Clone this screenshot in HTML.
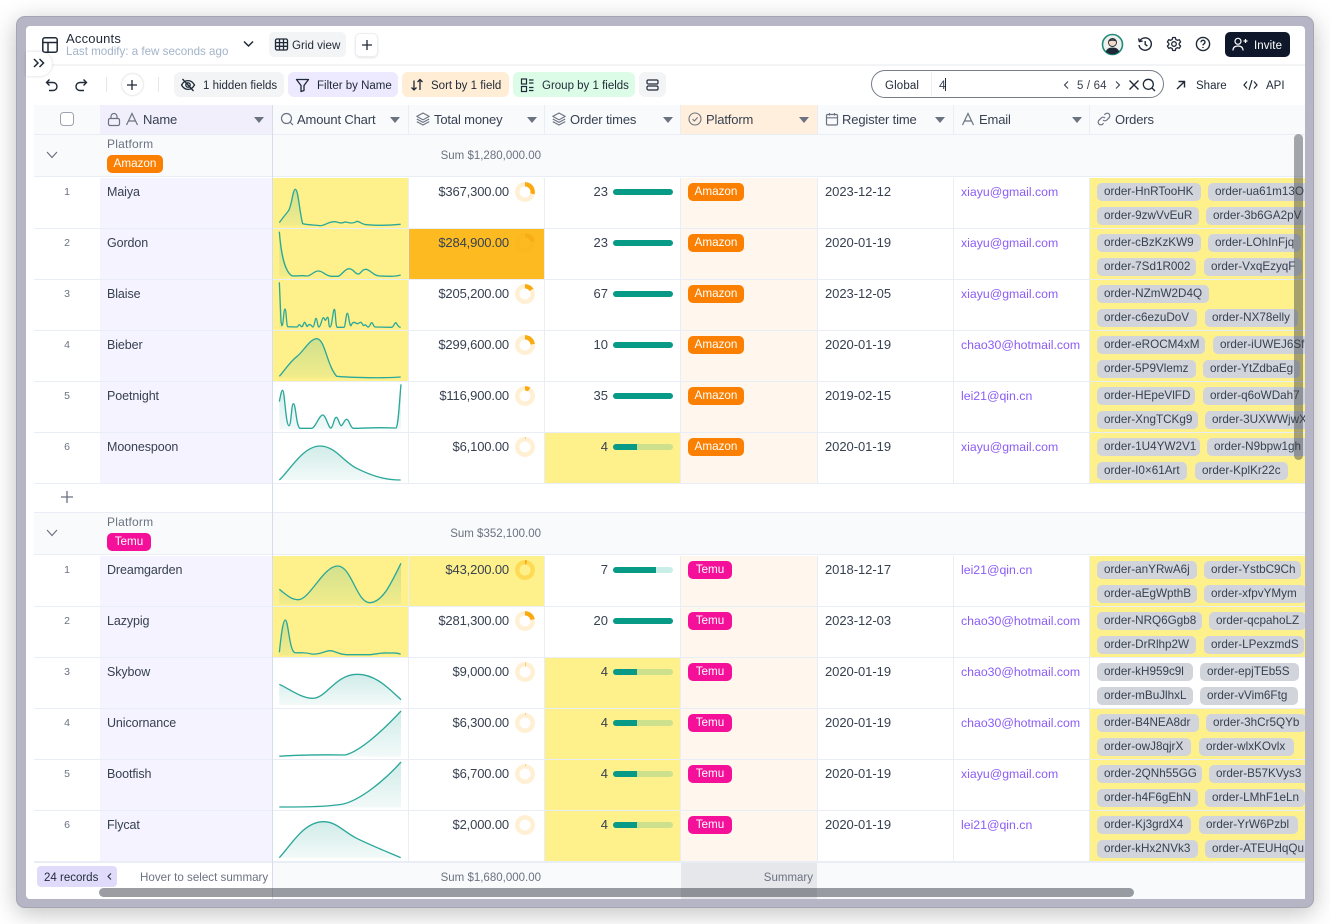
<!DOCTYPE html>
<html><head><meta charset="utf-8"><style>
*{box-sizing:border-box}
html,body{margin:0;padding:0;width:1330px;height:924px;overflow:hidden;background:#fff;font-family:"Liberation Sans",sans-serif;font-size:13px;color:#374151}
.abs,svg{position:absolute}
#frame{position:absolute;left:16px;top:16px;width:1298px;height:892px;background:#b6b5c6;border-radius:9px;box-shadow:0 5px 24px rgba(0,0,0,.25);border:1px solid #a5a5b2}
#win{position:absolute;left:26px;top:26px;width:1279px;height:873px;background:#fff;border-radius:4px}
#t{position:absolute;left:0;top:0;width:1305px;height:899px;overflow:hidden}
.tx{position:absolute;white-space:nowrap;line-height:16px}
.chip{position:absolute;top:72px;height:25px;border-radius:6px}
.r{position:absolute;left:34px;width:1271px;height:51px;background:#e9edf5}
.r>div{position:absolute;top:0;height:50px;background:#fff;line-height:28px;white-space:nowrap}
.r .a{left:0;width:66px;text-align:center;font-size:10.5px;color:#6b7280}
.r .b{left:66px;width:172px;background:#f5f3ff;padding-left:7px;font-size:12.5px;letter-spacing:-.1px}
.r .d{left:239px;width:135px}
.r .e{left:375px;width:135px;text-align:right;padding-right:35px;letter-spacing:-.15px}
.r .f{left:511px;width:135px;text-align:right;padding-right:72px}
.r .g{left:647px;width:136px;background:#fff7ed}
.r .h{left:784px;width:135px;padding-left:7px;letter-spacing:-.05px}
.r .i{left:920px;width:135px;padding-left:7px;color:#8b5cf6;font-size:12.3px}
.r .j{left:1056px;width:215px;overflow:hidden}
.r .y{background:#fef08a}
.r .o{background:#fdbb21}
.dn{position:absolute;left:106px;top:4px;width:20px;height:20px;border-radius:50%;background:conic-gradient(#faa90e 0 var(--p),#ffefd3 0);-webkit-mask:radial-gradient(circle,transparent 5.2px,#000 5.8px);mask:radial-gradient(circle,transparent 5.2px,#000 5.8px)}
.pb{position:absolute;left:68px;top:11px;width:60px;height:6px;border-radius:3px;background:#c9eee8;overflow:hidden}
.pb b{display:block;height:6px;background:#079a86}
.pb.yb{background:#cde08e}
.tg{position:absolute;left:7px;top:5px;height:18px;width:56px;border-radius:5px;background:#fb7f00;color:#fff;font-size:11.7px;line-height:18px;text-align:center}
.tg.tm{background:#f5109a;width:44px}
.k{position:absolute;height:18px;top:5px;border-radius:5px;background:#d1d5db;font-style:normal;font-size:11.7px;line-height:18px;padding-left:7px;color:#374151;white-space:nowrap;overflow:hidden}
.k.l{top:29px;line-height:17px}
.gh{position:absolute;left:34px;width:1271px;height:43px;background:#f8fafc;border-bottom:1px solid #e9edf5;border-top:1px solid #e9edf5}
.hd{position:absolute;top:105px;height:29px;background:#f8fafc;line-height:29px;white-space:nowrap;color:#374151;letter-spacing:-.15px}
.tri{position:absolute;width:0;height:0;border-left:5px solid transparent;border-right:5px solid transparent;border-top:6px solid #6b7280;top:117px}
.tb{font-size:11.5px;color:#1f2937;top:78px}
.sm{font-size:11.5px;color:#6b7280}
</style></head><body>
<div id="frame"></div>
<div id="win"></div>

<!-- top header -->
<div class="abs" style="left:26px;top:64px;width:1279px;height:2px;background:#f3f4f6"></div>
<svg style="left:41px;top:36px" width="18" height="18" viewBox="0 0 18 18" fill="none" stroke="#1f2937" stroke-width="1.5"><rect x="1.8" y="1.8" width="14.4" height="14.4" rx="2"/><path d="M1.8 6.5H16.2M7 6.5V16.2"/></svg>
<div class="tx" style="left:66px;top:31px;font-size:13px;color:#1f2937;letter-spacing:.2px">Accounts</div>
<div class="tx" style="left:66px;top:44px;font-size:11.6px;color:#a3b3c9">Last modify: a few seconds ago</div>
<svg style="left:242px;top:39px" width="13" height="10" viewBox="0 0 13 10" fill="none" stroke="#1f2937" stroke-width="1.5"><path d="M2 2.5L6.5 7L11 2.5"/></svg>
<div class="abs" style="left:269px;top:32px;width:77px;height:25px;background:#f3f4f6;border-radius:5px"></div>
<svg style="left:274px;top:37px" width="15" height="15" viewBox="0 0 15 15" fill="none" stroke="#1f2937" stroke-width="1.3"><rect x="1.5" y="2" width="12" height="11" rx="1.5"/><path d="M1.5 5.6H13.5M1.5 9.3H13.5M5.5 2V13M9.5 2V13"/></svg>
<div class="tx" style="left:292px;top:38px;font-size:11.6px;color:#1f2937">Grid view</div>
<div class="abs" style="left:355px;top:33px;width:23px;height:24px;background:#fff;border:1px solid #eceef1;border-radius:5px;box-shadow:0 1px 2px rgba(0,0,0,.1)"></div>
<svg style="left:360px;top:38px" width="14" height="14" viewBox="0 0 14 14" stroke="#1f2937" stroke-width="1.3"><path d="M7 2V12M2 7H12"/></svg>

<div class="abs" style="left:26px;top:52px;width:26px;height:24px;background:#fff;border-radius:0 12px 12px 0;box-shadow:0 0 3px rgba(0,0,0,.16)"></div>
<svg style="left:32px;top:57px" width="14" height="12" viewBox="0 0 14 12" fill="none" stroke="#1f2937" stroke-width="1.5"><path d="M2 2L6 6L2 10M7.5 2L11.5 6L7.5 10"/></svg>

<!-- top right -->
<svg style="left:1101px;top:33px" width="23" height="23" viewBox="0 0 23 23"><circle cx="11.5" cy="11.5" r="10" fill="#eef0ee" stroke="#1f8a78" stroke-width="1.6"/><path d="M4.8 18.5C6 15 9 14.6 11.5 14.6S17 15 18.2 18.5A9.2 9.2 0 0 1 4.8 18.5Z" fill="#1f2937"/><circle cx="11.5" cy="9.5" r="4" fill="#f4d9c5" stroke="#1f2937" stroke-width=".9"/><path d="M7.4 8.6C7.8 5.4 15.2 5.4 15.6 8.6C13.5 7.4 9.5 7.4 7.4 8.6Z" fill="#1f2937"/></svg>
<svg style="left:1137px;top:36px" width="16" height="16" viewBox="0 0 16 16" fill="none" stroke="#1f2937" stroke-width="1.4"><path d="M2.6 5.2A6.2 6.2 0 1 1 2 9"/><path d="M1.6 2.4L2.4 5.6L5.6 5"/><path d="M8.2 5V8.4L10.4 10"/></svg>
<svg style="left:1166px;top:36px" width="16" height="16" viewBox="0 0 16 16" fill="none" stroke="#1f2937" stroke-width="1.3"><path d="M6.7 1.5H9.3L9.8 3.4L11.4 4.3L13.3 3.7L14.6 6L13.2 7.3V8.8L14.6 10L13.3 12.3L11.4 11.7L9.8 12.6L9.3 14.5H6.7L6.2 12.6L4.6 11.7L2.7 12.3L1.4 10L2.8 8.8V7.3L1.4 6L2.7 3.7L4.6 4.3L6.2 3.4Z" stroke-linejoin="round"/><circle cx="8" cy="8" r="2.3"/></svg>
<svg style="left:1195px;top:36px" width="16" height="16" viewBox="0 0 16 16" fill="none" stroke="#1f2937" stroke-width="1.4"><circle cx="8" cy="8" r="6.6"/><path d="M6 6.2C6 3.7 10 3.7 10 6.2C10 7.8 8 7.8 8 9.4"/><path d="M8 11V12"/></svg>
<div class="abs" style="left:1225px;top:32px;width:65px;height:25px;background:#0f172a;border-radius:5px"></div>
<svg style="left:1232px;top:37px" width="16" height="15" viewBox="0 0 16 15" fill="none" stroke="#fff" stroke-width="1.2"><circle cx="6" cy="4.3" r="3"/><path d="M1 13.5C1 10 3.4 9 6 9S11 10 11 13.5"/><path d="M11.5 4H15.5M13.5 2V6"/></svg>
<div class="tx" style="left:1254px;top:38px;font-size:11.5px;color:#fff;letter-spacing:.1px">Invite</div>

<!-- toolbar -->
<svg style="left:45px;top:78px" width="14" height="14" viewBox="0 0 14 14" fill="none" stroke="#1f2937" stroke-width="1.4"><path d="M4.5 1.5L1.5 4.5L4.5 7.5"/><path d="M1.8 4.5H8A4 4 0 0 1 8 12.5H4"/></svg>
<svg style="left:74px;top:78px" width="14" height="14" viewBox="0 0 14 14" fill="none" stroke="#1f2937" stroke-width="1.4"><path d="M9.5 1.5L12.5 4.5L9.5 7.5"/><path d="M12.2 4.5H6A4 4 0 0 0 6 12.5H10"/></svg>
<div class="abs" style="left:106px;top:77px;width:1px;height:15px;background:#e5e7eb"></div>
<div class="abs" style="left:122px;top:74px;width:21px;height:21px;border-radius:50%;background:#fff;box-shadow:0 0 2px rgba(0,0,0,.25)"></div>
<svg style="left:125px;top:78px" width="14" height="14" viewBox="0 0 14 14" stroke="#1f2937" stroke-width="1.3"><path d="M7 2V12M2 7H12"/></svg>
<div class="abs" style="left:158px;top:77px;width:1px;height:15px;background:#e5e7eb"></div>

<div class="chip" style="left:174px;width:110px;background:#f3f4f6"></div>
<svg style="left:180px;top:77px" width="16" height="16" viewBox="0 0 16 16" fill="none" stroke="#1f2937" stroke-width="1.3"><path d="M1.5 8C3.2 5 5.5 3.6 8 3.6S12.8 5 14.5 8C12.8 11 10.5 12.4 8 12.4S3.2 11 1.5 8Z"/><circle cx="8" cy="8" r="2.2"/><path d="M2.5 2L13.5 14"/></svg>
<div class="tx tb" style="left:203px">1 hidden fields</div>
<div class="chip" style="left:288px;width:110px;background:#ede9fe"></div>
<svg style="left:295px;top:77px" width="15" height="16" viewBox="0 0 15 16" fill="none" stroke="#1f2937" stroke-width="1.3"><path d="M1.5 2.5H13.5L9 8.5V13.5L6 14.5V8.5Z" stroke-linejoin="round"/></svg>
<div class="tx tb" style="left:317px">Filter by Name</div>
<div class="chip" style="left:402px;width:107px;background:#ffedd5"></div>
<svg style="left:410px;top:77px" width="14" height="16" viewBox="0 0 14 16" fill="none" stroke="#1f2937" stroke-width="1.3"><path d="M4 3.5V13M1.5 10.5L4 13L6.5 10.5M10 13V2.5M7.5 5L10 2.5L12.5 5"/></svg>
<div class="tx tb" style="left:431px">Sort by 1 field</div>
<div class="chip" style="left:513px;width:122px;background:#dcfce7"></div>
<svg style="left:520px;top:77px" width="15" height="16" viewBox="0 0 15 16" fill="none" stroke="#1f2937" stroke-width="1.2"><rect x="1.5" y="2" width="5" height="5"/><rect x="1.5" y="9.5" width="5" height="5"/><path d="M9 3H13.5M9 6H13.5M9 10.5H13.5M9 13.5H13.5"/></svg>
<div class="tx tb" style="left:542px">Group by 1 fields</div>
<div class="chip" style="left:639px;width:27px;background:#f3f4f6"></div>
<svg style="left:646px;top:78px" width="13" height="14" viewBox="0 0 13 14" fill="none" stroke="#1f2937" stroke-width="1.2"><rect x="1" y="2" width="11" height="4" rx="1.3"/><rect x="1" y="8" width="11" height="4" rx="1.3"/></svg>

<!-- search -->
<div class="abs" style="left:871px;top:70px;width:293px;height:28px;border:1.5px solid #767c88;border-radius:14px;background:#fff"></div>
<div class="abs" style="left:931px;top:72px;width:1px;height:24px;background:#eceef1"></div>
<div class="tx tb" style="left:885px;letter-spacing:.15px">Global</div>
<div class="tx" style="left:939px;top:77px;font-size:12px;color:#374151">4</div>
<div class="abs" style="left:945px;top:78px;width:1px;height:13px;background:#1f2937"></div>
<svg style="left:1062px;top:80px" width="8" height="10" viewBox="0 0 8 10" fill="none" stroke="#374151" stroke-width="1.1"><path d="M6 1.5L2.5 5L6 8.5"/></svg>
<div class="tx" style="left:1077px;top:78px;font-size:11.5px;color:#374151;letter-spacing:.15px">5 / 64</div>
<svg style="left:1114px;top:80px" width="8" height="10" viewBox="0 0 8 10" fill="none" stroke="#374151" stroke-width="1.1"><path d="M2 1.5L5.5 5L2 8.5"/></svg>
<svg style="left:1128px;top:79px" width="12" height="12" viewBox="0 0 12 12" stroke="#1f2937" stroke-width="1.4"><path d="M1.5 1.5L10.5 10.5M10.5 1.5L1.5 10.5"/></svg>
<svg style="left:1142px;top:78px" width="14" height="14" viewBox="0 0 14 14" fill="none" stroke="#1f2937" stroke-width="1.3"><circle cx="6.3" cy="6.3" r="5"/><path d="M10 10L13 13"/></svg>
<svg style="left:1175px;top:79px" width="12" height="12" viewBox="0 0 12 12" fill="none" stroke="#1f2937" stroke-width="1.4"><path d="M2 10L9.5 2.5M3.5 2.5H9.5V8.5"/></svg>
<div class="tx tb" style="left:1196px">Share</div>
<svg style="left:1243px;top:78px" width="15" height="14" viewBox="0 0 15 14" fill="none" stroke="#1f2937" stroke-width="1.2"><path d="M4 3.5L1 7L4 10.5M11 3.5L14 7L11 10.5M9 2L6 12"/></svg>
<div class="tx tb" style="left:1266px">API</div>

<div id="t">
<!-- header row -->
<div class="abs" style="left:34px;top:105px;width:1271px;height:30px;background:#e9edf5"></div>
<div class="hd" style="left:34px;width:66px"></div>
<div class="abs" style="left:60px;top:112px;width:14px;height:14px;border:1.2px solid #9ca3af;border-radius:3.5px;background:#fff"></div>
<div class="hd" style="left:100px;width:172px;background:#f2effd;padding-left:43px">Name</div>
<div class="hd" style="left:273px;width:135px;padding-left:24px">Amount Chart</div>
<div class="hd" style="left:409px;width:135px;padding-left:25px">Total money</div>
<div class="hd" style="left:545px;width:135px;padding-left:25px">Order times</div>
<div class="hd" style="left:681px;width:136px;padding-left:25px;background:#ffefdc">Platform</div>
<div class="hd" style="left:818px;width:135px;padding-left:24px">Register time</div>
<div class="hd" style="left:954px;width:135px;padding-left:25px">Email</div>
<div class="hd" style="left:1090px;width:215px;padding-left:25px">Orders</div>
<i class="tri" style="left:254px"></i><i class="tri" style="left:390px"></i><i class="tri" style="left:527px"></i><i class="tri" style="left:663px"></i><i class="tri" style="left:799px"></i><i class="tri" style="left:935px"></i><i class="tri" style="left:1072px"></i>
<svg style="left:107px;top:112px" width="14" height="15" viewBox="0 0 14 15" fill="none" stroke="#6b7280" stroke-width="1.2"><rect x="1.5" y="6.5" width="11" height="7" rx="1.5"/><path d="M4 6.5V4.5A3 3 0 0 1 10 4.5V6.5"/></svg>
<svg style="left:125px;top:112px" width="14" height="14" viewBox="0 0 14 14" fill="none" stroke="#6b7280" stroke-width="1.2"><path d="M1.5 13L7 1.5L12.5 13M3.5 9H10.5"/></svg>
<svg style="left:280px;top:112px" width="14" height="14" viewBox="0 0 14 14" fill="none" stroke="#6b7280" stroke-width="1.2"><circle cx="6.5" cy="6.5" r="5"/><path d="M10 10L13 13"/></svg>
<svg style="left:416px;top:112px" width="14" height="14" viewBox="0 0 14 14" fill="none" stroke="#6b7280" stroke-width="1.1"><path d="M7 1L13.2 4.4L7 7.8L.8 4.4Z" stroke-linejoin="round"/><path d="M.8 7L7 10.4L13.2 7M.8 9.6L7 13L13.2 9.6"/></svg>
<svg style="left:552px;top:112px" width="14" height="14" viewBox="0 0 14 14" fill="none" stroke="#6b7280" stroke-width="1.1"><path d="M7 1L13.2 4.4L7 7.8L.8 4.4Z" stroke-linejoin="round"/><path d="M.8 7L7 10.4L13.2 7M.8 9.6L7 13L13.2 9.6"/></svg>
<svg style="left:688px;top:112px" width="14" height="14" viewBox="0 0 14 14" fill="none" stroke="#6b7280" stroke-width="1.1"><circle cx="7" cy="7" r="6"/><path d="M4.6 7.2L6.4 9L9.6 5.4"/></svg>
<svg style="left:825px;top:112px" width="14" height="14" viewBox="0 0 14 14" fill="none" stroke="#6b7280" stroke-width="1.2"><rect x="1.5" y="2.5" width="11" height="10.5" rx="1.2"/><path d="M1.5 5.8H12.5M4.5 1V3.5M9.5 1V3.5"/></svg>
<svg style="left:961px;top:112px" width="14" height="14" viewBox="0 0 14 14" fill="none" stroke="#6b7280" stroke-width="1.2"><path d="M1.5 13L7 1.5L12.5 13M3.5 9H10.5"/></svg>
<svg style="left:1097px;top:112px" width="14" height="14" viewBox="0 0 14 14" fill="none" stroke="#6b7280" stroke-width="1.2"><path d="M6 8A2.6 2.6 0 0 0 9.8 8L12.2 5.6A2.7 2.7 0 0 0 8.4 1.8L7.4 2.8"/><path d="M8 6A2.6 2.6 0 0 0 4.2 6L1.8 8.4A2.7 2.7 0 0 0 5.6 12.2L6.6 11.2"/></svg>

<!-- group 1 -->
<div class="gh" style="top:134px"></div>
<svg style="left:45px;top:150px" width="14" height="10" viewBox="0 0 14 10" fill="none" stroke="#6b7280" stroke-width="1.2"><path d="M2 2L7 7.5L12 2"/></svg>
<div class="tx" style="left:107px;top:136px;color:#6b7280;font-size:12px;letter-spacing:.2px">Platform</div>
<div class="tg" style="left:107px;top:155px">Amazon</div>
<div class="tx sm" style="left:341px;width:200px;text-align:right;top:148px">Sum $1,280,000.00</div>

<div class="r" style="top:178px"><div class="a">1</div><div class="b">Maiya</div><div class="d y"></div><div class="e">$367,300.00<i class="dn" style="--p:29%"></i></div><div class="f">23<span class="pb"><b style="width:60px"></b></span></div><div class="g"><span class="tg">Amazon</span></div><div class="h">2023-12-12</div><div class="i">xiayu@gmail.com</div><div class="j y"><i class="k" style="left:7px;width:104px">order-HnRTooHK</i><i class="k" style="left:118px;width:110px">order-ua61m13O</i><i class="k l" style="left:7px;width:102px">order-9zwVvEuR</i><i class="k l" style="left:116px;width:105px">order-3b6GA2pV</i></div></div>
<div class="r" style="top:229px"><div class="a">2</div><div class="b">Gordon</div><div class="d y"></div><div class="e o">$284,900.00<i class="dn" style="--p:22%;background:conic-gradient(#f9ad14 0 22%,#fbb81f 0)"></i></div><div class="f">23<span class="pb"><b style="width:60px"></b></span></div><div class="g"><span class="tg">Amazon</span></div><div class="h">2020-01-19</div><div class="i">xiayu@gmail.com</div><div class="j y"><i class="k" style="left:7px;width:104px">order-cBzKzKW9</i><i class="k" style="left:118px;width:93px">order-LOhInFjq</i><i class="k l" style="left:7px;width:99px">order-7Sd1R002</i><i class="k l" style="left:114px;width:98px">order-VxqEzyqF</i></div></div>
<div class="r" style="top:280px"><div class="a">3</div><div class="b">Blaise</div><div class="d y"></div><div class="e">$205,200.00<i class="dn" style="--p:16%"></i></div><div class="f">67<span class="pb"><b style="width:60px"></b></span></div><div class="g"><span class="tg">Amazon</span></div><div class="h">2023-12-05</div><div class="i">xiayu@gmail.com</div><div class="j y"><i class="k" style="left:7px;width:112px">order-NZmW2D4Q</i><i class="k l" style="left:7px;width:100px">order-c6ezuDoV</i><i class="k l" style="left:115px;width:93px">order-NX78elly</i></div></div>
<div class="r" style="top:331px"><div class="a">4</div><div class="b">Bieber</div><div class="d y"></div><div class="e">$299,600.00<i class="dn" style="--p:23.4%"></i></div><div class="f">10<span class="pb"><b style="width:60px"></b></span></div><div class="g"><span class="tg">Amazon</span></div><div class="h">2020-01-19</div><div class="i">chao30@hotmail.com</div><div class="j y"><i class="k" style="left:7px;width:108px">order-eROCM4xM</i><i class="k" style="left:123px;width:100px">order-iUWEJ6Sf</i><i class="k l" style="left:7px;width:99px">order-5P9Vlemz</i><i class="k l" style="left:113px;width:97px">order-YtZdbaEg</i></div></div>
<div class="r" style="top:382px"><div class="a">5</div><div class="b">Poetnight</div><div class="d"></div><div class="e">$116,900.00<i class="dn" style="--p:9%"></i></div><div class="f">35<span class="pb"><b style="width:60px"></b></span></div><div class="g"><span class="tg">Amazon</span></div><div class="h">2019-02-15</div><div class="i">lei21@qin.cn</div><div class="j y"><i class="k" style="left:7px;width:98px">order-HEpeVlFD</i><i class="k" style="left:113px;width:103px">order-q6oWDah7</i><i class="k l" style="left:7px;width:101px">order-XngTCKg9</i><i class="k l" style="left:115px;width:110px">order-3UXWWjwX</i></div></div>
<div class="r" style="top:433px"><div class="a">6</div><div class="b">Moonespoon</div><div class="d"></div><div class="e">$6,100.00<i class="dn" style="--p:.5%"></i></div><div class="f y">4<span class="pb yb"><b style="width:24px"></b></span></div><div class="g"><span class="tg">Amazon</span></div><div class="h">2020-01-19</div><div class="i">xiayu@gmail.com</div><div class="j y"><i class="k" style="left:7px;width:103px">order-1U4YW2V1</i><i class="k" style="left:117px;width:110px">order-N9bpw1gh</i><i class="k l" style="left:7px;width:90px">order-I0×61Art</i><i class="k l" style="left:105px;width:93px">order-KplKr22c</i></div></div>

<svg style="left:60px;top:490px" width="14" height="14" viewBox="0 0 14 14" stroke="#6b7280" stroke-width="1.3"><path d="M7 1V13M1 7H13"/></svg>

<!-- group 2 -->
<div class="gh" style="top:512px"></div>
<svg style="left:45px;top:528px" width="14" height="10" viewBox="0 0 14 10" fill="none" stroke="#6b7280" stroke-width="1.2"><path d="M2 2L7 7.5L12 2"/></svg>
<div class="tx" style="left:107px;top:514px;color:#6b7280;font-size:12px;letter-spacing:.2px">Platform</div>
<div class="tg tm" style="left:107px;top:533px">Temu</div>
<div class="tx sm" style="left:341px;width:200px;text-align:right;top:526px">Sum $352,100.00</div>

<div class="r" style="top:556px"><div class="a">1</div><div class="b">Dreamgarden</div><div class="d y"></div><div class="e y">$43,200.00<i class="dn" style="--p:3.4%;background:conic-gradient(#faa90e 0 3.4%,#fedb55 0)"></i></div><div class="f">7<span class="pb"><b style="width:43px"></b></span></div><div class="g"><span class="tg tm">Temu</span></div><div class="h">2018-12-17</div><div class="i">lei21@qin.cn</div><div class="j y"><i class="k" style="left:7px;width:100px">order-anYRwA6j</i><i class="k" style="left:114px;width:97px">order-YstbC9Ch</i><i class="k l" style="left:7px;width:100px">order-aEgWpthB</i><i class="k l" style="left:114px;width:102px">order-xfpvYMym</i></div></div>
<div class="r" style="top:607px"><div class="a">2</div><div class="b">Lazypig</div><div class="d y"></div><div class="e">$281,300.00<i class="dn" style="--p:22%"></i></div><div class="f">20<span class="pb"><b style="width:60px"></b></span></div><div class="g"><span class="tg tm">Temu</span></div><div class="h">2023-12-03</div><div class="i">chao30@hotmail.com</div><div class="j y"><i class="k" style="left:7px;width:105px">order-NRQ6Ggb8</i><i class="k" style="left:119px;width:97px">order-qcpahoLZ</i><i class="k l" style="left:7px;width:99px">order-DrRlhp2W</i><i class="k l" style="left:114px;width:100px">order-LPexzmdS</i></div></div>
<div class="r" style="top:658px"><div class="a">3</div><div class="b">Skybow</div><div class="d"></div><div class="e">$9,000.00<i class="dn" style="--p:.7%"></i></div><div class="f y">4<span class="pb yb"><b style="width:24px"></b></span></div><div class="g"><span class="tg tm">Temu</span></div><div class="h">2020-01-19</div><div class="i">chao30@hotmail.com</div><div class="j"><i class="k" style="left:7px;width:96px">order-kH959c9l</i><i class="k" style="left:110px;width:99px">order-epjTEb5S</i><i class="k l" style="left:7px;width:96px">order-mBuJlhxL</i><i class="k l" style="left:110px;width:98px">order-vVim6Ftg</i></div></div>
<div class="r" style="top:709px"><div class="a">4</div><div class="b">Unicornance</div><div class="d"></div><div class="e">$6,300.00<i class="dn" style="--p:.5%"></i></div><div class="f y">4<span class="pb yb"><b style="width:24px"></b></span></div><div class="g"><span class="tg tm">Temu</span></div><div class="h">2020-01-19</div><div class="i">chao30@hotmail.com</div><div class="j y"><i class="k" style="left:7px;width:102px">order-B4NEA8dr</i><i class="k" style="left:116px;width:100px">order-3hCr5QYb</i><i class="k l" style="left:7px;width:94px">order-owJ8qjrX</i><i class="k l" style="left:109px;width:95px">order-wlxKOvlx</i></div></div>
<div class="r" style="top:760px"><div class="a">5</div><div class="b">Bootfish</div><div class="d"></div><div class="e">$6,700.00<i class="dn" style="--p:.5%"></i></div><div class="f y">4<span class="pb yb"><b style="width:24px"></b></span></div><div class="g"><span class="tg tm">Temu</span></div><div class="h">2020-01-19</div><div class="i">xiayu@gmail.com</div><div class="j y"><i class="k" style="left:7px;width:105px">order-2QNh55GG</i><i class="k" style="left:119px;width:104px">order-B57KVys3</i><i class="k l" style="left:7px;width:101px">order-h4F6gEhN</i><i class="k l" style="left:115px;width:100px">order-LMhF1eLn</i></div></div>
<div class="r" style="top:811px"><div class="a">6</div><div class="b">Flycat</div><div class="d"></div><div class="e">$2,000.00<i class="dn" style="--p:.2%"></i></div><div class="f y">4<span class="pb yb"><b style="width:24px"></b></span></div><div class="g"><span class="tg tm">Temu</span></div><div class="h">2020-01-19</div><div class="i">lei21@qin.cn</div><div class="j y"><i class="k" style="left:7px;width:94px">order-Kj3grdX4</i><i class="k" style="left:109px;width:99px">order-YrW6Pzbl</i><i class="k l" style="left:7px;width:101px">order-kHx2NVk3</i><i class="k l" style="left:115px;width:105px">order-ATEUHqQu</i></div></div>

<!-- sparklines group 1 -->
<svg style="left:270px;top:175px" width="280" height="310" viewBox="0 0 840 930" fill="url(#gr)" stroke="none">
<defs><linearGradient id="gr" x1="0" y1="0" x2="0" y2="1"><stop offset="0" stop-color="#2ba89a" stop-opacity=".22"/><stop offset="1" stop-color="#2ba89a" stop-opacity=".06"/></linearGradient></defs>
<path d="M28 143C35 133 45 120 55 108C65 95 68 43 76 43C85 43 88 110 98 146L98 152L28 152Z"/>
<path d="M28 170C32 220 40 285 65 302L65 304L28 304Z"/>
<path d="M28 322L33 440L36 452L36 458L28 458Z"/>
<path d="M28 604C45 585 60 560 80 545C100 530 120 491 140 491C165 491 170 570 200 604L200 608L28 608Z"/>
<path d="M28 680C32 660 34 646 38 646C44 646 47 752 57 752C64 752 64 686 70 686C78 686 78 755 90 760L125 760C135 760 148 720 158 720C168 720 175 760 183 759C190 755 192 727 199 727C205 727 208 752 214 752C220 748 224 733 230 733C238 733 240 758 250 760C270 760 300 758 330 758L378 759C385 755 388 680 393 628L393 763L28 763Z"/>
<path d="M28 915C60 885 100 813 150 813C195 813 220 860 260 880C300 900 340 915 392 915Z"/>
<g fill="none" stroke="#2ba89a" stroke-width="4" stroke-linejoin="round">
<path d="M28 143C35 133 45 120 55 108C65 95 68 43 76 43C85 43 88 110 98 146C105 149 130 150 150 152C165 152 175 140 193 140C203 140 210 148 225 141C235 141 245 149 261 139C270 139 275 149 290 149C320 152 360 151 392 148"/>
<path d="M28 170C32 220 40 285 65 302C80 305 90 300 110 303C125 303 130 288 145 288C160 288 165 303 185 304L205 304C215 300 225 281 237 281C250 281 255 297 265 297C272 297 275 283 287 283C300 283 310 303 330 303L360 304C375 304 385 302 392 300"/>
<path d="M28 322L33 440L36 452C40 452 41 402 45 402C49 402 49 452 53 455L80 456C84 456 85 450 88 449C91 449 93 456 96 455C99 455 101 442 104 442C107 442 109 456 112 454C115 449 118 448 120 449C124 449 126 456 129 456C133 456 135 430 138 430C142 430 142 456 147 456C152 456 156 428 160 428C163 428 164 436 166 436C168 436 170 427 173 427C177 427 175 456 180 456C186 456 189 403 193 403C197 403 196 456 202 457L222 457C226 457 228 415 232 415C236 415 238 454 243 452C246 445 249 442 252 442C256 443 258 445 262 446C266 446 268 442 272 442C277 442 278 456 284 450C288 447 290 456 295 456C300 454 302 443 305 443C309 443 310 456 316 456L365 457C370 457 374 443 377 443C380 443 383 457 392 457"/>
<path d="M28 604C45 585 60 560 80 545C100 530 120 491 140 491C165 491 170 570 200 604C240 608 350 610 392 606"/>
<path d="M28 680C32 660 34 646 38 646C44 646 47 752 57 752C64 752 64 686 70 686C78 686 78 755 90 760L125 760C135 760 148 720 158 720C168 720 175 760 183 759C190 755 192 727 199 727C205 727 208 752 214 752C220 748 224 733 230 733C238 733 240 758 250 760C270 760 300 758 330 758L378 759C385 755 388 680 393 628"/>
<path d="M28 915C60 885 100 813 150 813C195 813 220 860 260 880C300 900 340 915 392 915"/>
</g>
</svg>
<!-- sparklines group 2 -->
<svg style="left:270px;top:550px" width="280" height="320" viewBox="0 0 840 960" fill="url(#gr)" stroke="none">
<path d="M28 118C50 135 65 150 85 149C120 148 160 48 203 48C245 48 260 160 300 158C340 156 365 95 393 40L393 162L28 162Z"/>
<path d="M28 307C32 270 38 210 46 210C55 210 58 305 75 308L75 316L28 316Z"/>
<path d="M28 403C60 418 95 445 128 445C170 445 195 373 262 373C320 373 360 420 393 449L393 465L28 465Z"/>
<path d="M28 619C80 614 180 614 225 615C270 605 340 540 393 483L393 620Z"/>
<path d="M28 771C90 771 170 771 220 762C270 750 340 695 393 636L393 772L28 772Z"/>
<path d="M28 923C60 890 100 815 160 815C200 815 220 845 260 865C300 885 350 905 392 923Z"/>
<g fill="none" stroke="#2ba89a" stroke-width="4" stroke-linejoin="round">
<path d="M28 118C50 135 65 150 85 149C120 148 160 48 203 48C245 48 260 160 300 158C340 156 365 95 393 40"/>
<path d="M28 307C32 270 38 210 46 210C55 210 58 305 75 308C90 310 100 305 125 312C150 315 165 302 180 302C195 302 205 314 230 314L300 314C320 312 335 308 350 309C365 310 380 306 392 313"/>
<path d="M28 403C60 418 95 445 128 445C170 445 195 373 262 373C320 373 360 420 393 449"/>
<path d="M28 619C80 614 180 614 225 615C270 605 340 540 393 483"/>
<path d="M28 771C90 771 170 771 220 762C270 750 340 695 393 636"/>
<path d="M28 923C60 890 100 815 160 815C200 815 220 845 260 865C300 885 350 905 392 923"/>
</g>
</svg>

<!-- footer -->
<div class="abs" style="left:34px;top:861px;width:1271px;height:38px;background:#f9fafc;border-top:2px solid #e9edf5"></div>
<div class="abs" style="left:34px;top:863px;width:238px;height:36px;background:#fff"></div>
<div class="abs" style="left:681px;top:863px;width:136px;height:36px;background:#e5e7eb"></div>
<div class="abs" style="left:37px;top:866px;width:80px;height:21px;background:#e0dbfb;border-radius:4px"></div>
<div class="tx" style="left:44px;top:870px;font-size:11.5px;color:#1f2937">24 records</div>
<svg style="left:106px;top:872px" width="7" height="9" viewBox="0 0 7 9" fill="none" stroke="#1f2937" stroke-width="1"><path d="M5 1.5L2 4.5L5 7.5"/></svg>
<div class="tx" style="left:140px;top:870px;font-size:11.6px;color:#6b7280">Hover to select summary</div>
<div class="tx sm" style="left:341px;width:200px;text-align:right;top:870px">Sum $1,680,000.00</div>
<div class="tx sm" style="left:681px;width:132px;text-align:right;top:870px">Summary</div>

<!-- frozen line -->
<div class="abs" style="left:272px;top:105px;width:1px;height:794px;background:#d6deea"></div>
</div>

<!-- scrollbars -->
<div class="abs" style="left:1294px;top:134px;width:9px;height:326px;border-radius:5px;background:rgba(60,65,75,.46)"></div>
<div class="abs" style="left:99px;top:888px;width:1035px;height:9px;border-radius:5px;background:rgba(55,60,70,.5)"></div>
</body></html>
